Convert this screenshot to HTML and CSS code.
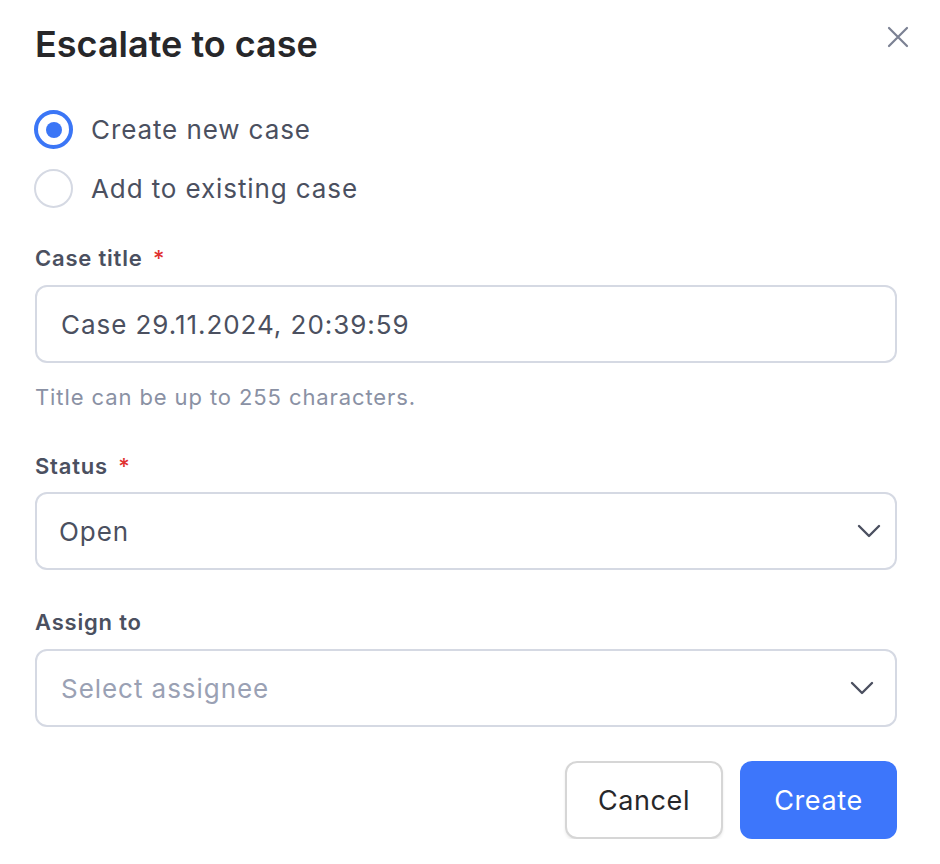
FILE: index.html
```html
<!DOCTYPE html>
<html>
<head>
<meta charset="utf-8">
<link rel="stylesheet" href="styles.css">
</head>
<body>
<div class="dialog">
  <div class="header">
    <h1 class="title">Escalate to case</h1>
    <button class="close" aria-label="Close">
      <svg width="22" height="22" viewBox="0 0 22 22"><path d="M2 2 L20 20 M20 2 L2 20" stroke="#7b8193" stroke-width="2.2" stroke-linecap="round" fill="none"/></svg>
    </button>
  </div>
  <div class="radios">
    <label class="radio-row"><span class="radio checked"><span class="dot"></span></span><span class="radio-text">Create new case</span></label>
    <label class="radio-row"><span class="radio"></span><span class="radio-text">Add to existing case</span></label>
  </div>
  <div class="field first">
    <div class="label">Case title <span class="req">*</span></div>
    <div class="input"><span class="value value-title">Case 29.11.2024, 20:39:59</span></div>
    <div class="help">Title can be up to 255 characters.</div>
  </div>
  <div class="field status">
    <div class="label">Status <span class="req">*</span></div>
    <div class="input select"><span class="value value-open">Open</span>
      <svg class="chev chev-a" width="24" height="14" viewBox="0 0 24 14"><path d="M2 2 L12 12 L22 2" stroke="#4b5060" stroke-width="2.4" fill="none" stroke-linecap="round" stroke-linejoin="round"/></svg>
    </div>
  </div>
  <div class="field assign">
    <div class="label">Assign to</div>
    <div class="input select"><span class="value placeholder">Select assignee</span>
      <svg class="chev chev-b" width="24" height="14" viewBox="0 0 24 14"><path d="M2 2 L12 12 L22 2" stroke="#4b5060" stroke-width="2.4" fill="none" stroke-linecap="round" stroke-linejoin="round"/></svg>
    </div>
  </div>
  <div class="actions">
    <button class="btn cancel">Cancel</button>
    <button class="btn create">Create</button>
  </div>
</div>
</body>
</html>
```
FILE: styles.css
```css
* { box-sizing: border-box; }
html, body { margin: 0; padding: 0; background: #ffffff; }
body { font-family: Inter, "Noto Sans", sans-serif; color: #4b5060; }
.dialog { padding: 22px 43px 0 35px; display: flex; flex-direction: column; }
.header { display: flex; justify-content: space-between; align-items: flex-start; height: 44px; }
.title { margin: 0; font-size: 36px; line-height: 44px; font-weight: 600; color: #27272a; letter-spacing: 0; }
.close { border: 0; background: none; padding: 0; margin: 4px -12px 0 0; width: 22px; height: 22px; display: flex; }
.radios { margin-top: 34px; display: flex; flex-direction: column; }
.radio-row { display: flex; align-items: center; height: 59px; }
.radio { width: 39px; height: 39px; border-radius: 50%; border: 2px solid #d5d9e3; display: flex; align-items: center; justify-content: center; margin-left: -1px; }
.radio.checked { border: 4px solid #3b76f6; }
.dot { width: 16px; height: 16px; border-radius: 50%; background: #3b76f6; }
.radio-text { margin-left: 18px; font-size: 26px; color: #4b5060; letter-spacing: 0.9px; }
.field { display: flex; flex-direction: column; }
.field.first { margin-top: 26px; }
.field.status { margin-top: 41px; }
.field.assign { margin-top: 38px; }
.label { font-size: 22px; line-height: 28px; font-weight: 600; color: #4b5060; letter-spacing: 0.8px; }
.req { color: #e0312f; font-weight: 500; margin-left: 4px; }
.input { margin-top: 13px; height: 78px; border: 2px solid #d5d9e3; border-radius: 12px; display: flex; align-items: center; padding: 0 24px; position: relative; }
.status .input { margin-top: 12px; }
.value { font-size: 26px; color: #4b5060; letter-spacing: 0.95px; }
.value-open { margin-left: -2px; }
.placeholder { color: #9aa1b4; }
.help { margin-top: 20px; font-size: 22px; line-height: 28px; color: #8a91a4; letter-spacing: 0.9px; }
.select { justify-content: space-between; }
.chev-a { margin-right: -10px; }
.chev-b { margin-right: -3px; }
.actions { margin-top: 34px; display: flex; justify-content: flex-end; gap: 17px; }
.btn { height: 78px; border-radius: 12px; font-family: Inter, "Noto Sans", sans-serif; font-size: 27px; cursor: pointer; letter-spacing: 0.6px; }
.cancel { width: 158px; background: #fff; border: 2px solid #d6d6d6; color: #27272a; box-shadow: 0 2px 3px rgba(0,0,0,0.08); }
.create { width: 157px; background: #3d76fb; border: 0; color: #ffffff; }
```
